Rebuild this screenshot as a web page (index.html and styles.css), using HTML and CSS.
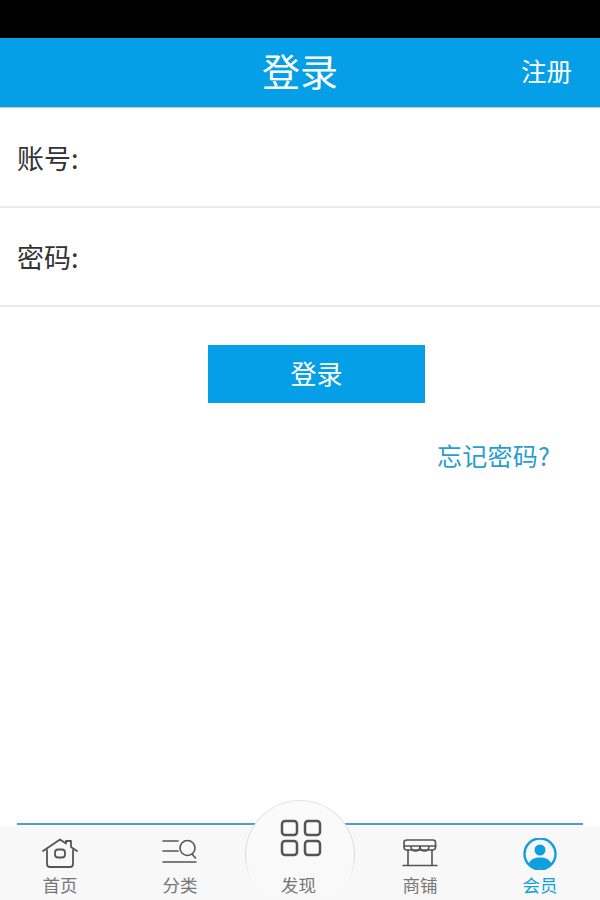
FILE: index.html
```html
<!DOCTYPE html>
<html lang="zh">
<head>
    <meta charset="utf-8">
    <title>登录</title>
    <link rel="stylesheet" href="styles.css">
</head>
<body>
    <div class="page">
        <div class="status-bar"></div>
        <div class="header">
            <h1>登录</h1>
            <a class="register">注册</a>
        </div>
        <div class="main">
            <div class="form-row"><label>账号:</label></div>
            <div class="form-row"><label>密码:</label></div>
            <div class="button-row"><button class="login-button">登录</button></div>
            <div class="forgot-row"><a class="forgot">忘记密码?</a></div>
        </div>
        <div class="tabbar">
            <div class="tab">
                <svg class="icon" width="36" height="30" viewBox="0 0 36 30" fill="none" stroke="#555" stroke-width="1.800" stroke-linejoin="round" stroke-linecap="round">
                    <path d="M1 13 18 1.500l6 4V3h5v6l6 4"/>
                    <path d="M5 12v14q0 3 3 3h20q3 0 3-3V12"/>
                    <rect x="13" y="11.500" width="10" height="8" rx="3"/>
                </svg>
                <span>首页</span>
            </div>
            <div class="tab">
                <svg class="icon" width="36" height="26" viewBox="0 0 36 26" fill="none" stroke="#555" stroke-width="1.600" stroke-linecap="round">
                    <path d="M1 3h15M1 13h15M1 24h33"/>
                    <circle cx="25.500" cy="10" r="7.500"/>
                    <path d="M30 16l3.500 4"/>
                </svg>
                <span>分类</span>
            </div>
            <div class="tab tab-center">
                <svg class="icon" width="42" height="38" viewBox="0 0 42 38" fill="none" stroke="#555" stroke-width="2.500">
                    <rect x="2" y="2" width="15" height="14" rx="3"/>
                    <rect x="25" y="2" width="15" height="14" rx="3"/>
                    <rect x="2" y="22" width="15" height="14" rx="3"/>
                    <rect x="25" y="22" width="15" height="14" rx="3"/>
                </svg>
                <span>发现</span>
            </div>
            <div class="tab">
                <svg class="icon" width="36" height="29" viewBox="0 0 36 29" fill="none" stroke="#555" stroke-width="1.600" stroke-linejoin="round" stroke-linecap="round">
                    <path d="M5 2h26q2.500 0 2.500 2.500V9q0 3-3 3H5q-3 0-3-3V4.500Q2 2 5 2z"/>
                    <path d="M2 8h32M9 8q0 5 4.500 5T18 8q0 5 4.500 5T27 8"/>
                    <path d="M6 12v15M30 12v15M1 27.500h34"/>
                </svg>
                <span>商铺</span>
            </div>
            <div class="tab tab-active">
                <svg class="icon" width="34" height="32" viewBox="0 0 34 32">
                    <circle cx="17" cy="16" r="15.500" fill="none" stroke="#0f9fdf" stroke-width="2.400"/>
                    <circle cx="17" cy="12" r="5.500" fill="#0f9fdf"/>
                    <path d="M5.500 25.500C8 21 12 19.500 17 19.500S26 21 28.500 25.500C25.500 29 21.500 30.500 17 30.500S8.500 29 5.500 25.500z" fill="#0f9fdf"/>
                </svg>
                <span>会员</span>
            </div>
        </div>
    </div>
</body>
</html>
```

FILE: styles.css
```css
* {
    box-sizing: border-box;
}
body {
    margin: 0;
    font-family: "Noto Sans CJK SC", "Liberation Sans", sans-serif;
    background-color: #fff;
}
.page {
    display: flex;
    flex-direction: column;
    height: 900px;
    overflow: hidden;
}
.status-bar {
    height: 38px;
    background-color: #000;
}
.header {
    position: relative;
    height: 70px;
    display: flex;
    align-items: center;
    justify-content: center;
    padding-bottom: 7px;
    background-color: #059fe8;
    border-bottom: 1px solid #c9c9c9;
    color: #fff;
}
.header h1 {
    margin: 0;
    font-size: 38px;
    font-weight: 400;
}
.register {
    position: absolute;
    right: 28px;
    top: 13px;
    font-size: 25.500px;
}
.main {
    flex: 1;
    display: flex;
    flex-direction: column;
}
.form-row {
    height: 99px;
    display: flex;
    align-items: center;
    padding-left: 17px;
    border-bottom: 2px solid #e9e9e9;
    font-size: 27px;
    color: #333;
}
.form-row:first-child {
    height: 100px;
}
.button-row {
    padding: 38px 0 0 208px;
}
.login-button {
    display: block;
    width: 217px;
    height: 58px;
    border: none;
    padding: 0 0 3px;
    background-color: #059fe8;
    color: #fff;
    font-family: inherit;
    font-size: 26px;
}
.forgot-row {
    display: flex;
    justify-content: flex-end;
    padding: 34px 50px 0 0;
}
.forgot {
    font-size: 25px;
    letter-spacing: 0.250px;
    color: #2a9dd0;
}
.tabbar {
    position: relative;
    height: 74px;
    display: grid;
    grid-template-columns: repeat(5, 120px);
    padding-top: 12px;
    background-color: #f8f8f8;
}
.tabbar::before {
    content: "";
    position: absolute;
    left: 17px;
    right: 17px;
    top: -3px;
    height: 2px;
    background-color: #4f9fc0;
}
.tab {
    position: relative;
    display: flex;
    flex-direction: column;
    align-items: center;
    font-size: 17.500px;
    color: #777;
}
.tab span {
    position: absolute;
    top: 35px;
    line-height: 24px;
}
.tab-center::before {
    content: "";
    position: absolute;
    left: 5px;
    top: -38px;
    width: 108px;
    height: 108px;
    border-radius: 50%;
    border: 1.500px solid transparent;
    background: linear-gradient(#fbfbfb, #f8f8f8) padding-box, linear-gradient(#e4e4e4, #dcdcdc 50%, #f8f8f8 75%) border-box;
}
.tab-center .icon {
    position: absolute;
    top: -19px;
    margin-left: 2px;
}
.tab-center span {
    margin-left: -3px;
}
.tab-active {
    color: #0f9fdf;
}
```
